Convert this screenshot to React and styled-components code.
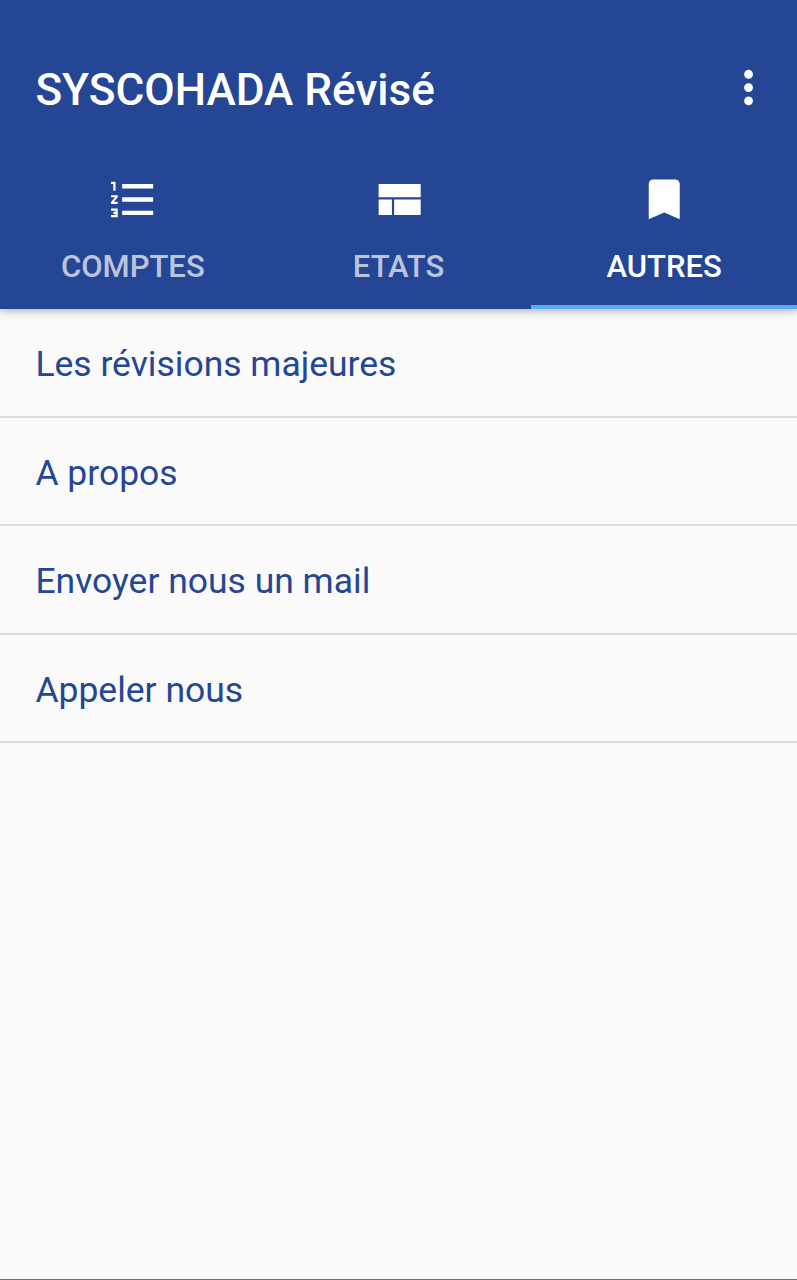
import styled, { createGlobalStyle } from 'styled-components';

const GlobalStyle = createGlobalStyle`
  * {
    box-sizing: border-box;
  }
  body {
    margin: 0;
    background: #fafafa;
    font-family: Roboto, sans-serif;
  }
`

const Screen = styled.div`
  display: flex;
  flex-direction: column;
  height: 1280px;
  overflow: hidden;
  background: #fafafa;
  border-bottom: 1px solid #6e6e6e;
`

const AppBar = styled.header`
  flex: none;
  height: 309px;
  padding-top: 26px;
  background: #254595;
  box-shadow: 0 2px 8px rgba(0, 0, 0, 0.3);
`

const Toolbar = styled.div`
  display: flex;
  align-items: center;
  justify-content: space-between;
  height: 123.6px;
  padding: 0 22px 0 35.4px;
`

const Title = styled.h1`
  margin: 0;
  padding-top: 5px;
  font-size: 44.15px;
  line-height: 52px;
  font-weight: 500;
  color: #fff;
  white-space: nowrap;
`

const MenuButton = styled.button`
  display: flex;
  padding: 0;
  border: 0;
  background: none;
  color: #fff;
`

const Tabs = styled.nav`
  display: grid;
  grid-template-columns: repeat(3, 1fr);
  height: 159.4px;
`

const Tab = styled.button`
  display: flex;
  flex-direction: column;
  align-items: center;
  padding: 23.4px 0 0;
  border: 0;
  border-bottom: 4.4px solid ${props => props.$active ? '#56abf3' : 'transparent'};
  background: none;
  font-family: inherit;
  color: #fff;
`

const TabLabel = styled.span`
  margin-top: 23px;
  font-size: 31px;
  line-height: 36px;
  font-weight: 500;
  color: ${props => props.$active ? '#fff' : 'rgba(255, 255, 255, 0.7)'};
`

const Icon = styled.svg`
  display: block;
  width: 53.14px;
  height: 53.14px;
  fill: currentColor;
`

const List = styled.ul`
  margin: 0;
  padding: 0;
  list-style: none;
`

const Item = styled.li`
  display: flex;
  align-items: center;
  height: 108.5px;
  padding: 4.2px 35.4px 0;
  border-bottom: 2px solid #dcdcdc;
  font-size: 35.48px;
  line-height: 42px;
  color: #254595;
`

const tabs = [
  {
    label: 'COMPTES',
    viewBox: '-0.3 0 24 24',
    path: 'M2 17h2v.5H3v1h1v.5H2v1h3v-4H2v1zm1-9h1V4H2v1h1v3zm-1 3h1.8L2 13.1v.9h3v-1H3.2L5 10.9V10H2v1zm5-6v2h14V5H7zm0 14h14v-2H7v2zm0-6h14v-2H7v2z'
  },
  {
    label: 'ETATS',
    viewBox: '0 0 24 24',
    path: 'M3 19h6v-7H3v7zm7 0h12v-7H10v7zM3 5v6h19V5H3z'
  },
  {
    label: 'AUTRES',
    viewBox: '0.15 0.1 24 24',
    path: 'M17 3H7c-1.1 0-1.99.9-1.99 2L5 21l7-3 7 3V5c0-1.1-.9-2-2-2z'
  }
];

const items = [
  'Les révisions majeures',
  'A propos',
  'Envoyer nous un mail',
  'Appeler nous'
];

function App() {
  const active = 'AUTRES';

  return (
    <Screen>
      <GlobalStyle />
      <AppBar>
        <Toolbar>
          <Title>SYSCOHADA Révisé</Title>
          <MenuButton aria-label="Menu">
            <Icon viewBox="0 0 24 24">
              <circle cx="12" cy="6" r="2" />
              <circle cx="12" cy="12" r="2" />
              <circle cx="12" cy="18" r="2" />
            </Icon>
          </MenuButton>
        </Toolbar>
        <Tabs>
          {tabs.map(tab => (
            <Tab key={tab.label} $active={tab.label === active}>
              <Icon viewBox={tab.viewBox}>
                <path d={tab.path} />
              </Icon>
              <TabLabel $active={tab.label === active}>{tab.label}</TabLabel>
            </Tab>
          ))}
        </Tabs>
      </AppBar>
      <List>
        {items.map(item => <Item key={item}>{item}</Item>)}
      </List>
    </Screen>
  );
}

export default App;
